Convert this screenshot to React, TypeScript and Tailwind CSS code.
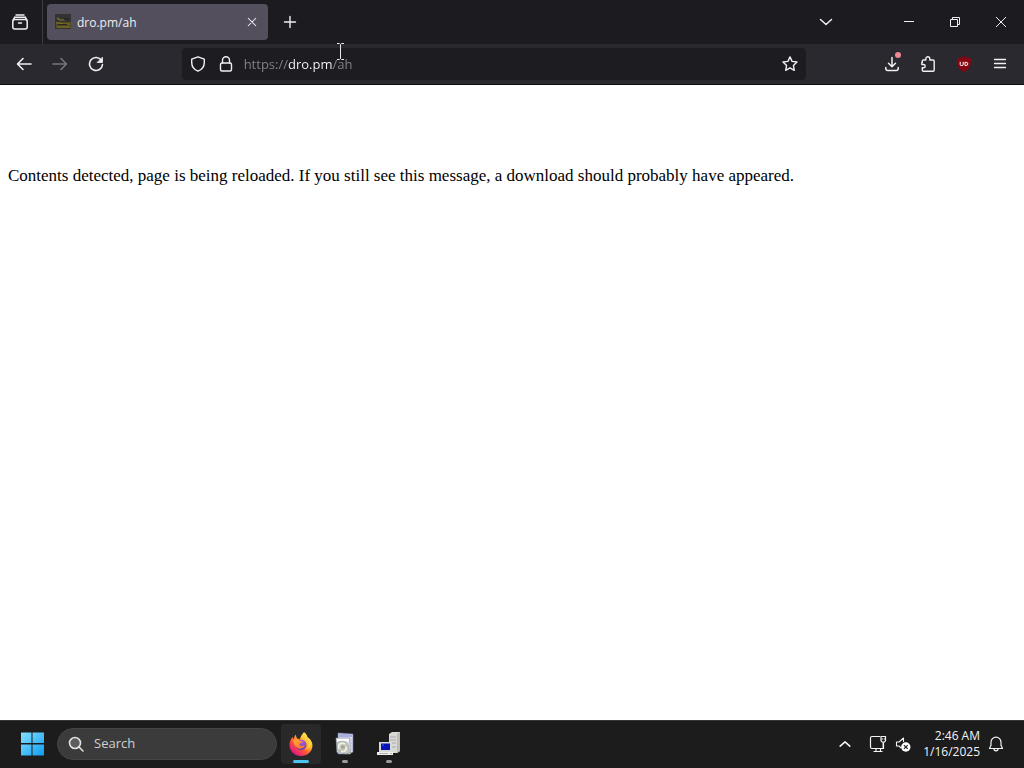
import React, { useState } from "react";

type ButtonProps = {
  label: string;
  className?: string;
  disabled?: boolean;
  children: React.ReactNode;
};

function IconButton({ label, className = "", disabled, children }: ButtonProps) {
  return (
    <button
      type="button"
      aria-label={label}
      disabled={disabled}
      className={`flex shrink-0 items-center justify-center ${className}`}
    >
      {children}
    </button>
  );
}

function Stroke({ children, className = "size-4", width = 1.4 }: { children: React.ReactNode; className?: string; width?: number }) {
  return (
    <svg
      viewBox="0 0 16 16"
      className={`shrink-0 ${className}`}
      fill="none"
      stroke="currentColor"
      strokeWidth={width}
      strokeLinecap="round"
      strokeLinejoin="round"
      aria-hidden="true"
    >
      {children}
    </svg>
  );
}

function TabStrip() {
  return (
    <header className="flex h-11 items-center bg-[#1c1b20] text-[#f0f0f3]">
      <div className="flex h-full w-[43px] shrink-0 items-center border-r border-[#3c3b44] pl-0.5">
        <IconButton label="Recent browsing" className="size-9">
          <Stroke width={1.5}>
            <path d="M4 .9h8M2.600 3.300h10.800" />
            <rect x=".8" y="5.500" width="14.400" height="9.500" rx="2" />
            <path d="m1.200 6 1.400-2.700M14.800 6l-1.400-2.700M6.500 9h3" />
          </Stroke>
        </IconButton>
      </div>
      <div className="ml-1 flex h-9 w-[221px] items-center rounded bg-[#544f5d] pl-2 pr-1">
        <svg viewBox="0 0 16 16" className="size-4 shrink-0" aria-hidden="true">
          <path fill="#343333" d="M0 0h16v15H0z" />
          <path fill="#51491f" d="M1 8h15v6H1z" />
          <path fill="none" stroke="#86782b" strokeWidth="1.2" d="M2 4l3 2h5M1 9h4l2 1h8M2 13h13" />
          <path fill="#25272b" d="M9 4h5v2H9zM3 10h9v1H3z" />
        </svg>
        <span className="ml-1.5 grow pt-0.5 text-xs">dro.pm/ah</span>
        <IconButton label="Close tab" className="size-6">
          <Stroke className="size-3" width={1.4}>
            <path d="m3 3 10 10M13 3 3 13" />
          </Stroke>
        </IconButton>
      </div>
      <IconButton label="New tab" className="ml-1 size-9">
        <Stroke width={1.4}>
          <path d="M8 2.500v11M2.500 8h11" />
        </Stroke>
      </IconButton>
      <div className="grow" />
      <IconButton label="List all tabs" className="mr-[42px] size-9">
        <Stroke width={1.5}>
          <path d="m2.500 5.500 5.500 5 5.500-5" />
        </Stroke>
      </IconButton>
      <IconButton label="Minimize" className="h-full w-[46px]">
        <svg viewBox="0 0 12 12" className="size-3" stroke="currentColor" aria-hidden="true">
          <path d="M1 5.500h10" />
        </svg>
      </IconButton>
      <IconButton label="Restore" className="h-full w-[46px]">
        <svg viewBox="0 0 12 12" className="size-3" stroke="currentColor" fill="none" aria-hidden="true">
          <path d="M1.500 3.500h7v7h-7zM3.500 3.500v-2h7v7h-2" />
        </svg>
      </IconButton>
      <IconButton label="Close window" className="h-full w-[46px]">
        <svg viewBox="0 0 12 12" className="size-3" stroke="currentColor" aria-hidden="true">
          <path d="m1 1 10 10M11 1 1 11" />
        </svg>
      </IconButton>
    </header>
  );
}

function Toolbar() {
  const [url, setUrl] = useState("https://dro.pm/ah");
  return (
    <nav aria-label="Navigation" className="flex h-[41px] items-center border-b border-[#0c0c0d] bg-[#2a292f] px-1.5 text-[#f0f0f3]">
      <IconButton label="Back" className="h-9 w-9">
        <Stroke width={1.6}>
          <path d="M15 8H1.500M7 2.500 1.500 8 7 13.500" />
        </Stroke>
      </IconButton>
      <IconButton label="Forward" className="h-9 w-9 text-[#77767d]" disabled>
        <Stroke width={1.6}>
          <path d="M1 8h13.500M9 2.500 14.500 8 9 13.500" />
        </Stroke>
      </IconButton>
      <IconButton label="Reload" className="h-9 w-9">
        <Stroke width={1.6}>
          <path d="M13.500 4.500A6.500 6.500 0 1 0 14.500 8.500" />
          <path d="M14.500 1.500v5h-5z" fill="currentColor" strokeWidth="0.8" />
        </Stroke>
      </IconButton>
      <div className="flex-[68]" />
      <div className="relative flex h-8 flex-[624] items-center rounded bg-[#1d1c21] px-0.5">
        <IconButton label="Tracking protection" className="h-7 w-7">
          <Stroke>
            <path d="M8 .8 14.300 3.200v3.300c0 4-2.600 7.200-6.300 8.700C4.300 13.700 1.700 10.500 1.700 6.500V3.200z" />
          </Stroke>
        </IconButton>
        <IconButton label="Site information" className="h-7 w-7">
          <Stroke>
            <path d="M4.500 7V4.300a3.500 3.500 0 0 1 7 0V7" />
            <rect x="2.500" y="7" width="11" height="8" rx="1.500" />
          </Stroke>
        </IconButton>
        <input
          type="text"
          aria-label="Address"
          value={url}
          onChange={(e) => setUrl(e.target.value)}
          className="ml-1 w-0 grow bg-[linear-gradient(90deg,#85848c_44px,#fbfbfe_44px,#fbfbfe_89px,#85848c_89px)] bg-clip-text pt-0.5 text-[13px] text-transparent caret-white outline-none"
        />
        <IconButton label="Bookmark this page" className="h-7 w-7">
          <Stroke>
            <path d="m8 .9 2.100 4.500 4.900.6-3.600 3.400.9 4.900L8 11.900l-4.300 2.400.9-4.900L1 6l4.900-.6z" />
          </Stroke>
        </IconButton>
        <svg viewBox="0 0 9 17" className="pointer-events-none absolute -top-[5px] left-[154px] h-[17px] w-[9px]" fill="none" stroke="#e8e8ea" aria-hidden="true">
          <path d="M1 .5h2.500l1 1 1-1H8M4.500 1.500v14M1 16.500h2.500l1-1 1 1H8" />
        </svg>
      </div>
      <div className="flex-[68]" />
      <IconButton label="Downloads" className="relative h-9 w-9">
        <Stroke width={1.5}>
          <path d="M8 1.500v9M4.500 7.300 8 10.800l3.500-3.500M1.800 11.500v1a2 2 0 0 0 2 2h8.400a2 2 0 0 0 2-2v-1" />
        </Stroke>
        <span className="absolute right-[9px] top-1.5 size-1.5 rounded-full bg-[#e98a92]" />
      </IconButton>
      <IconButton label="Extensions" className="h-9 w-9">
        <Stroke>
          <path d="M2.300 6.500V5.200c0-.7.5-1.200 1.200-1.200h2.300V2.800a2 2 0 0 1 4 0V4h3.200c.7 0 1.200.5 1.200 1.200v8.900c0 .7-.5 1.200-1.200 1.200H3.500c-.7 0-1.200-.5-1.200-1.200v-2.300h1.200a1.600 1.600 0 0 0 0-3.300H1.800V6.500z" />
        </Stroke>
      </IconButton>
      <IconButton label="uBlock Origin" className="h-9 w-9">
        <svg viewBox="0 0 16 16" className="size-4" aria-hidden="true">
          <path fill="#850711" d="M8 0c2 1.500 4 2 6.800 2.200C15.500 9 14 13 8 16 2 13 .5 9 1.200 2.200 4 2 6 1.500 8 0z" />
          <path fill="none" stroke="#fff" strokeWidth="1" d="M4.200 5.800v2.700q0 1 1 1h1q1 0 1-1V5.800M9 6.300v3.200h1.200q1.600 0 1.600-1.600t-1.600-1.600H9" />
        </svg>
      </IconButton>
      <IconButton label="Application menu" className="h-9 w-9">
        <Stroke width={1.3}>
          <path d="M2.500 3.500h11M2.500 7.500h11M2.500 11.500h11" />
        </Stroke>
      </IconButton>
    </nav>
  );
}

function FirefoxIcon() {
  return (
    <svg viewBox="0 0 24 24" className="size-6" aria-hidden="true">
      <defs>
        <linearGradient id="flame" x1="0.850" y1="0.100" x2="0.200" y2="0.900">
          <stop offset="0" stopColor="#fff44f" />
          <stop offset="0.350" stopColor="#ffb22e" />
          <stop offset="0.650" stopColor="#ff5634" />
          <stop offset="1" stopColor="#e31587" />
        </linearGradient>
        <radialGradient id="globe" cx="0.600" cy="0.200" r="0.900">
          <stop offset="0" stopColor="#b45bea" />
          <stop offset="1" stopColor="#4c3fa5" />
        </radialGradient>
        <linearGradient id="fox" x1="0" y1="0" x2="1" y2="1">
          <stop offset="0" stopColor="#ffad32" />
          <stop offset="1" stopColor="#ff6b2e" />
        </linearGradient>
      </defs>
      <path fill="url(#flame)" d="M15 .3c2.300 1.700 3.300 3.800 3.500 5.200l1.100.5c2.500 2 3.900 5 3.900 7.500C23.300 19.500 18.500 24 12 24 5.500 24 .5 19.200.5 13c0-3 1-5.800 3-8l.8 2.200L6.500 2.500 8 6.500c1 .1 2 .5 2.800 1C11.500 4.500 13 2.300 15 .3z" />
      <circle cx="12" cy="12.800" r="5.400" fill="url(#globe)" />
      <path fill="url(#fox)" d="M4 8.500c2.500-2.200 5.500-1.800 7.500.6 1 0 1.900.2 2.200.7-.4 1.100-2 1.500-3 1.900-.5 1.100.2 2.200 1.500 2.400 1.500.1 2.200-.9 3.700-.5-1 2.500-3.600 3.600-6.100 2.800C6.500 15.400 4.500 12.500 4 8.500z" />
      <path fill="#ffd947" opacity=".8" d="M15 .3c-.4 3.200 4.800 5.700 4.700 11 0 3-1.500 5-3.500 6.300 4-.7 6.300-3.500 6-7.200-.3-2-1.300-3.500-2.600-4.400l-1.100-.5C18.300 4.100 17.300 2 15 .3z" />
    </svg>
  );
}

function DocumentsIcon() {
  return (
    <svg viewBox="0 0 24 24" className="size-6" aria-hidden="true">
      <path fill="#d7dbea" stroke="#7476a8" strokeWidth=".6" d="m5 1 15 1v18l-4 2H5z" />
      <path fill="#a9aee0" d="m6 1.500 13 1v2.500H6z" />
      <path stroke="#b2b5d2" strokeWidth=".8" d="M17 8h2.500M17 11h2.500M17 14h2.500M17 17h2.500" />
      <path fill="#e6e9f0" stroke="#8b8ea5" strokeWidth=".6" d="M3 6h13.500l1 16L4 20.500z" />
      <path fill="#fff" d="M4 7h12v2H4z" />
      <path fill="#c5c7b9" stroke="#96988b" strokeWidth=".6" d="M4 11c4-3 9-2 11 1l1.500 9-4 1L5 19z" />
      <path fill="none" stroke="#f3f4ea" strokeWidth="1.600" d="M6 17c-1.500-5 2-7 6-5M8 19.500c4 1 6-2 5-5" />
      <path fill="#a3a597" d="M8 14q3-2 4 1-1 3-4 1z" />
    </svg>
  );
}

function ComputerIcon() {
  return (
    <svg viewBox="0 0 24 24" className="size-6" aria-hidden="true">
      <path fill="#d8d8d4" d="m12 2 3-2h8v19l-3 2h-8z" />
      <path fill="#bcbbb6" d="m20 2 3-2v19l-3 2z" />
      <path stroke="#999" strokeWidth=".7" d="M13 5h6M13 8h6M13 11h6M15 15h4" />
      <path fill="#d9d9d5" d="M2 10h13v10H2z" />
      <path fill="#0713b6" d="M4 11.500h9v6.500H4z" />
      <path fill="#4665df" d="M5 12.500h2v1H5z" />
      <path fill="#efefeb" d="M0 20h16v3H0z" />
      <path stroke="#888" strokeWidth=".6" d="M2 21.500h9M13 21.500h2" />
    </svg>
  );
}

function TaskButton({ label, active, children }: { label: string; active?: boolean; children: React.ReactNode }) {
  return (
    <button
      type="button"
      aria-label={label}
      className={`relative flex size-10 shrink-0 items-center justify-center rounded ${active ? "bg-[#292929]" : ""}`}
    >
      {children}
      <span className={`absolute bottom-px h-[3px] rounded-full ${active ? "w-4 bg-[#4cc2ee]" : "w-1.5 bg-[#9b9b9b]"}`} />
    </button>
  );
}

function Taskbar() {
  return (
    <footer className="flex h-12 items-center border-t border-[#353535] bg-[#1c1c1c] pb-px pl-3 pr-5 text-[#f4f4f4]">
      <IconButton label="Start" className="size-10">
        <svg viewBox="0 0 24 24" className="size-6" aria-hidden="true">
          <defs>
            <linearGradient id="start" x1="0" y1="0" x2="24" y2="24" gradientUnits="userSpaceOnUse">
              <stop stopColor="#8be2ff" />
              <stop offset="1" stopColor="#0c9cf2" />
            </linearGradient>
          </defs>
          <path fill="url(#start)" d="M1 .5h10.500V11H1zM12.500.5H24V11H12.500zM1 12.500h10.500V23.500H1zM12.500 12.500H24V23.500H12.500z" />
        </svg>
      </IconButton>
      <label className="ml-[5px] flex h-8 w-[220px] items-center rounded-full border border-[#444444] bg-[#3b3b3b] pl-2.5">
        <svg viewBox="0 0 16 16" className="size-4 shrink-0" fill="none" stroke="#e2e2e2" strokeWidth="1.600" strokeLinecap="round" aria-hidden="true">
          <circle cx="7" cy="7" r="5.500" fill="#5d5d5d" />
          <path d="m11 11 4 4" />
        </svg>
        <input type="search" aria-label="Search" placeholder="Search" className="ml-2.5 w-0 grow bg-transparent text-[13px] outline-none placeholder:text-[#d0d0d0]" />
      </label>
      <div className="ml-1 flex gap-1">
        <TaskButton label="Firefox" active>
          <FirefoxIcon />
        </TaskButton>
        <TaskButton label="Documents">
          <DocumentsIcon />
        </TaskButton>
        <TaskButton label="Remote computer">
          <ComputerIcon />
        </TaskButton>
      </div>
      <div className="grow" />
      <IconButton label="Show hidden icons" className="h-10 w-8">
        <Stroke className="size-3.5" width={1.8}>
          <path d="m2.500 10.500 5.500-5 5.500 5" />
        </Stroke>
      </IconButton>
      <button type="button" aria-label="Network and volume" className="flex h-10 shrink-0 items-center gap-2 px-2">
        <svg viewBox="0 0 18 18" className="size-[18px]" fill="none" stroke="currentColor" strokeWidth="1.200" aria-hidden="true">
          <path d="M11 1.500H3A1.500 1.500 0 0 0 1.500 3v9A1.500 1.500 0 0 0 3 13.500h11.500V8M4.500 16.500h9M7 13.500v3M11.500 13.500v3" />
          <path d="M12 1.500h4.500v4.300L15.500 7H13l-1-1.200zM14.200 7v6M13.300 3.500v1M15.200 3.500v1" />
        </svg>
        <svg viewBox="0 0 16 16" className="size-4" aria-hidden="true">
          <path fill="none" stroke="currentColor" strokeWidth="1.100" strokeLinejoin="round" d="M6 12 4 10H1.500V6H4l4.500-4v4" />
          <circle cx="10.800" cy="11" r="4.700" fill="#fff" />
          <path stroke="#1c1c1c" strokeWidth="1.100" d="m8.900 9.100 3.800 3.800M12.700 9.100l-3.800 3.800" />
        </svg>
      </button>
      <button type="button" className="flex h-10 shrink-0 items-center gap-2 pl-1 text-right text-xs leading-4">
        <span>
          <span className="block">2:46 AM</span>
          <span className="block">1/16/2025</span>
        </span>
        <Stroke width={1.200}>
          <path d="M8 1.200a5 5 0 0 0-5 5v3L1.500 12.500h13L13 9.200v-3a5 5 0 0 0-5-5zM6 12.800a2 2 0 0 0 4 0" />
        </Stroke>
      </button>
    </footer>
  );
}

export default function App() {
  return (
    <div className="flex min-h-screen flex-col bg-white font-['Open_Sans','Noto_Sans',sans-serif]">
      <TabStrip />
      <Toolbar />
      <main className="grow px-2 pt-[81px] font-['Liberation_Serif',serif] text-[17px] leading-5 text-black">
        <p>Contents detected, page is being reloaded. If you still see this message, a download should probably have appeared.</p>
      </main>
      <Taskbar />
    </div>
  );
}
